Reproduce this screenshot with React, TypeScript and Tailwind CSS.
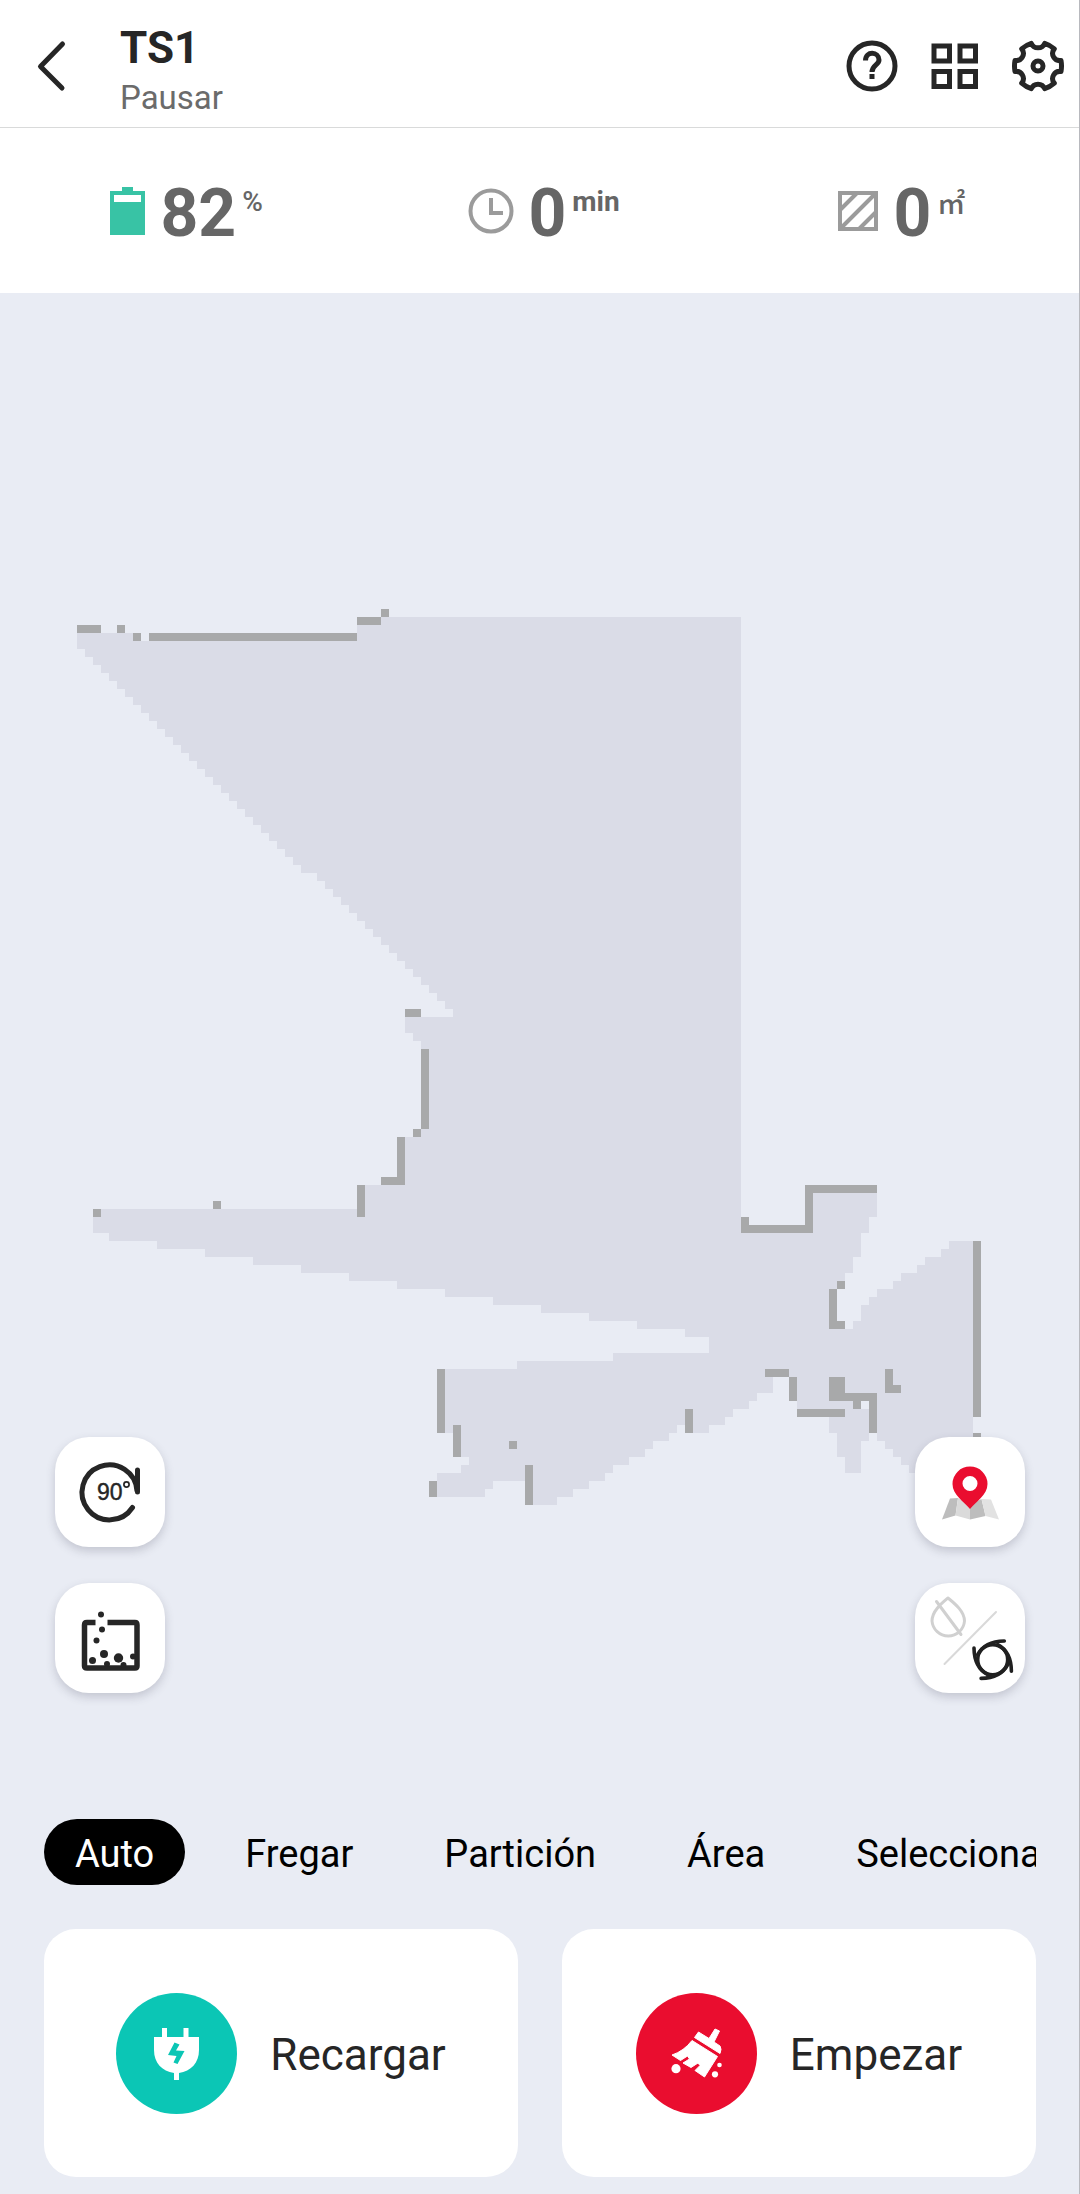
import { useState, type ReactNode } from "react";

const CELL = 8;
const MAP_X = 77;
const MAP_Y = 316;

/** A block of map cells: [column, row, columns, rows]. */
type Block = [number, number, number, number];

const walls: Block[] = [
  [0, 2, 3, 1], [5, 2, 1, 1], [7, 3, 1, 1], [9, 3, 26, 1], [35, 1, 3, 1], [38, 0, 1, 1],
  [41, 50, 2, 1], [43, 55, 1, 10], [42, 65, 1, 1], [40, 66, 1, 6], [38, 71, 2, 1], [35, 72, 1, 4],
  [17, 74, 1, 1], [2, 75, 1, 1],
  [45, 95, 1, 8], [47, 102, 1, 4], [44, 109, 1, 2], [56, 107, 1, 5], [54, 104, 1, 1], [76, 100, 1, 3],
  [83, 76, 1, 2], [84, 77, 8, 1], [91, 72, 1, 5], [92, 72, 8, 1],
  [95, 84, 1, 1], [94, 85, 1, 5], [95, 89, 1, 1],
  [112, 79, 1, 22], [112, 103, 1, 1],
  [86, 95, 3, 1], [89, 96, 1, 3], [90, 100, 6, 1],
  [94, 96, 2, 3], [96, 98, 4, 1], [97, 99, 1, 1], [99, 99, 1, 4], [101, 95, 1, 3], [102, 97, 1, 1],
];

/** Runs of cleaned floor: [row, rows, first column, end column]. */
type Run = [number, number, number, number];

const upperEdge: Run[] = Array.from({ length: 46 }, (_, i): Run => {
  const row = i + 5;
  return [row, 1, row < 33 ? row - 4 : row - 3, 83];
});

const floor: Run[] = [
  [1, 1, 38, 83], [2, 2, 35, 83], [3, 1, 0, 7], [4, 1, 0, 83],
  ...upperEdge,
  [51, 2, 41, 83], [53, 1, 42, 83], [54, 12, 43, 83], [66, 6, 41, 83], [72, 3, 36, 83], [75, 1, 3, 83],
  [76, 2, 2, 83], [73, 3, 92, 100], [76, 2, 92, 99],
  [78, 1, 4, 98], [79, 1, 10, 98], [80, 1, 16, 98], [81, 1, 22, 97], [82, 1, 28, 97],
  [83, 1, 34, 96], [84, 1, 40, 95], [85, 1, 46, 94], [86, 1, 52, 94], [87, 1, 58, 94],
  [88, 1, 64, 94], [89, 1, 70, 94],
  [79, 1, 109, 112], [80, 1, 108, 112], [81, 1, 106, 112], [82, 1, 105, 112], [83, 1, 103, 112],
  [84, 1, 102, 112], [85, 1, 100, 112], [86, 1, 99, 112], [87, 2, 98, 112], [89, 1, 97, 112],
  [90, 1, 76, 112], [91, 2, 79, 112], [93, 1, 67, 112], [94, 1, 55, 112], [95, 1, 46, 112],
  [96, 2, 46, 87], [98, 1, 46, 85], [99, 1, 46, 84], [100, 1, 46, 82], [101, 1, 46, 81],
  [102, 1, 46, 75], [102, 1, 77, 79], [103, 1, 48, 74], [104, 1, 48, 72], [105, 1, 48, 71],
  [106, 1, 49, 69], [107, 1, 48, 67], [108, 1, 45, 66], [109, 1, 45, 52], [109, 1, 57, 64],
  [110, 1, 45, 51], [110, 1, 57, 62], [111, 1, 57, 60],
  [96, 3, 90, 112], [99, 1, 90, 98], [99, 1, 99, 112], [100, 1, 96, 112], [101, 2, 94, 112],
  [103, 1, 95, 99], [103, 1, 100, 112], [104, 2, 95, 98], [106, 2, 96, 98],
  [104, 1, 101, 112], [105, 1, 102, 112], [106, 1, 103, 112], [107, 1, 104, 112],
  [108, 1, 106, 112], [109, 1, 108, 112],
];

function FloorMap() {
  return (
    <svg viewBox="0 0 1080 1220" className="block w-full" shapeRendering="crispEdges" role="img" aria-label="Mapa">
      <g fill="#dadce7">
        {floor.map(([row, rows, from, to], i) => (
          <rect key={i} x={MAP_X + from * CELL} y={MAP_Y + row * CELL} width={(to - from) * CELL} height={rows * CELL} />
        ))}
      </g>
      <g fill="#a8a9aa">
        {walls.map(([col, row, cols, rows], i) => (
          <rect key={i} x={MAP_X + col * CELL} y={MAP_Y + row * CELL} width={cols * CELL} height={rows * CELL} />
        ))}
      </g>
    </svg>
  );
}

function BackIcon() {
  return (
    <svg width="52" height="52" viewBox="0 0 52 52" fill="none" stroke="#262626" strokeWidth="5" strokeLinecap="round" strokeLinejoin="round">
      <path d="M38.500 4 L16.500 26.500 L38 48" />
    </svg>
  );
}

function HelpIcon() {
  return (
    <svg width="52" height="52" viewBox="0 0 52 52" fill="none" stroke="#262626" strokeWidth="5">
      <circle cx="26" cy="26" r="23" />
      <path d="M19.500 20.500 C19.500 10.500 33 11.500 33 20 C33 25 26 25 26 32" />
      <rect x="23.500" y="34" width="5" height="5" fill="#262626" stroke="none" />
    </svg>
  );
}

function GridIcon() {
  return (
    <svg width="52" height="52" viewBox="0 0 52 52" fill="none" stroke="#262626" strokeWidth="5">
      <path d="M5 6H20.500V21H5Z M31 6H46.500V21H31Z M5 31.500H20.500V46.500H5Z M31 31.500H46.500V46.500H31Z" />
    </svg>
  );
}

function GearIcon() {
  return (
    <svg width="52" height="52" viewBox="-26 -26 52 52" fill="none" stroke="#262626" strokeWidth="5" strokeLinejoin="round">
      <path d="M23 -5.500 Q24 0 23 5.500 A7.200 7.200 0 0 0 16.300 17.200 Q12 21 6.700 22.700 A7.200 7.200 0 0 0 -6.700 22.700 Q-12 21 -16.300 17.200 A7.200 7.200 0 0 0 -23 5.500 Q-24 0 -23 -5.500 A7.200 7.200 0 0 0 -16.300 -17.200 Q-12 -21 -6.700 -22.700 A7.200 7.200 0 0 0 6.700 -22.700 Q12 -21 16.300 -17.200 A7.200 7.200 0 0 0 23 -5.500Z" />
      <circle r="5" />
    </svg>
  );
}

function BatteryIcon() {
  return (
    <svg width="36" height="48" viewBox="0 0 36 48" fill="#38c3a5">
      <path fillRule="evenodd" d="M12 0H23V4H35V48H0V4H12Z M4 8V15H31V8Z" />
    </svg>
  );
}

function ClockIcon() {
  return (
    <svg width="46" height="46" viewBox="0 0 46 46" fill="none" stroke="#9b9b9b" strokeWidth="4">
      <circle cx="23" cy="23" r="20.500" />
      <path d="M23 10V25H35" />
    </svg>
  );
}

function AreaIcon() {
  return (
    <svg width="42" height="42" viewBox="0 0 42 42" fill="none" stroke="#9b9b9b" strokeWidth="4">
      <path d="M3 3H39V39H3Z M3 20L20 3 M4 38L38 4 M22 39L39 22" />
    </svg>
  );
}

function RotateIcon() {
  return (
    <svg width="110" height="110" viewBox="0 0 110 110" fill="none" stroke="#262626" strokeWidth="5" strokeLinecap="round">
      <path d="M77.500 70.500 A27.500 27.500 0 1 1 82 54 M82.500 33V55" />
      <text x="42" y="63" fontFamily="Liberation Sans, Arial, sans-serif" fontSize="23" fill="#262626" stroke="#262626" strokeWidth="0.400">90</text>
      <circle cx="71.500" cy="47.500" r="2.600" strokeWidth="1.700" />
    </svg>
  );
}

function DirtBoxIcon() {
  return (
    <svg width="110" height="110" viewBox="0 0 110 110" fill="#262626">
      <path d="M40.500 39.500H32Q29.500 39.500 29.500 42V83Q29.500 85 32 85H80Q82 85 82 83V42Q82 39.500 80 39.500H52.500" fill="none" stroke="#262626" strokeWidth="5.500" />
      <circle cx="46" cy="31.500" r="3" />
      <circle cx="47" cy="46.500" r="3" />
      <circle cx="41.500" cy="57.500" r="3" />
      <circle cx="49" cy="71" r="4" />
      <circle cx="37.500" cy="77.500" r="3.500" />
      <circle cx="63.500" cy="75" r="4.700" />
      <circle cx="78" cy="73.500" r="3" />
      <circle cx="52" cy="81" r="3" />
      <circle cx="68.500" cy="82" r="3" />
    </svg>
  );
}

function PinIcon() {
  return (
    <svg width="110" height="110" viewBox="0 0 110 110">
      <path d="M35 61.500L27 82.500L40.500 78.500L43 61Z" fill="#bdbdbd" />
      <path d="M43 61L40.500 78.500L55 82.500V68Z" fill="#dadada" />
      <path d="M55 68V82.500L70.500 79L66.500 62Z" fill="#bdbdbd" />
      <path d="M66.500 62L70.500 79L84 82.500L76 62.500Z" fill="#e2e2e2" />
      <path fillRule="evenodd" fill="#ea0d2f" d="M55 72C49 64.500 37.500 58 37.500 47A17.500 17.500 0 0 1 72.500 47C72.500 58 61 64.500 55 72Z M55 39A7.500 7.500 0 1 0 55 54A7.500 7.500 0 1 0 55 39Z" />
    </svg>
  );
}

function ModeIcon() {
  return (
    <svg width="110" height="110" viewBox="0 0 110 110" fill="none" strokeLinecap="round">
      <path d="M81 29L29.500 81" stroke="#d9d9d9" strokeWidth="2" />
      <path d="M33 15C27 20 17 28 17 38A16.300 16.300 0 0 0 49.500 38C49.500 28 39 20 33 15Z M21.500 18.500L46 51.500" stroke="#d0d0d0" strokeWidth="3" strokeLinejoin="round" />
      <g transform="translate(77.700 76.700)" stroke="#202020" strokeWidth="3.600">
        <circle r="15" />
        <path d="M11.600 -18.700Q-8 -18.500 -15 -5" />
        <path d="M18.700 11.600Q18.500 -8 5 -15" />
        <path d="M-11.600 18.700Q8 18.500 15 5" />
        <path d="M-18.700 -11.600Q-18.500 8 -5 15" />
      </g>
    </svg>
  );
}

function PlugIcon() {
  return (
    <svg width="121" height="121" viewBox="0 0 121 121">
      <circle cx="60.500" cy="60.500" r="60.500" fill="#0bc6b5" />
      <path fill="#fff" d="M46 35H51V44H67.500V35H72.500V44H83V57C83 70 75 78 63 80V87H58V80C46 78 38 70 38 57V44H46Z" />
      <path fill="#0bc6b5" d="M58.500 49.500L63.500 51.500L60 57.500L68.500 58L61.500 71L57.500 69.500L60.500 63L52 62Z" />
    </svg>
  );
}

function BroomIcon() {
  return (
    <svg width="121" height="121" viewBox="0 0 121 121">
      <circle cx="60.500" cy="60.500" r="60.500" fill="#ea0d2f" />
      <g fill="#fff" stroke="#fff" strokeWidth="1" strokeLinejoin="round">
        <path d="M79 36L83.500 38L78 49L84 53Q86 56 84 60.500L58.500 44.500L62.500 39L73 45.500Z" />
        <path d="M56 47.500L81.500 63.500L68.500 84L59 77.500L64 72.500L62 70L55 74.500L47 70L53.500 66L51.500 63L44.500 67.500L36 62Q48 58 56 47.500Z" />
      </g>
      <circle cx="40" cy="75.700" r="4.600" fill="#fff" />
      <circle cx="79" cy="81.300" r="3.100" fill="#fff" />
      <circle cx="83.500" cy="72" r="2.300" fill="#fff" />
    </svg>
  );
}

function Stat({ icon, value, unit, unitClass }: { icon: ReactNode; value: string; unit: string; unitClass: string }) {
  return (
    <div className="flex items-center justify-center text-[#666]">
      {icon}
      <div className="ml-3.5 flex items-start pt-1.5">
        <span className="text-[66px] leading-[70px] font-bold">{value}</span>
        <span className={unitClass}>{unit}</span>
      </div>
    </div>
  );
}

function FloatingButton({ label, children }: { label: string; children: ReactNode }) {
  return (
    <button type="button" aria-label={label} className="size-[110px] rounded-[34px] bg-white shadow-[0_4px_10px_rgba(60,60,80,0.22)]">
      {children}
    </button>
  );
}

function ActionCard({ label, children }: { label: string; children: ReactNode }) {
  return (
    <button type="button" className="flex h-[248px] items-center justify-center gap-[33px] rounded-[32px] bg-white text-[44px] text-[#262626]">
      {children}
      <span className="pt-1">{label}</span>
    </button>
  );
}

const tabs = ["Auto", "Fregar", "Partición", "Área", "Seleccionar"];

export default function App() {
  const [active, setActive] = useState("Auto");

  return (
    <div className="relative flex min-h-screen flex-col bg-[#e9ecf4] font-['Roboto',sans-serif] after:absolute after:inset-y-0 after:right-0 after:w-px after:bg-[#b8b9be]">
      <header className="flex h-32 items-center border-b border-[#d9dada] bg-white pr-4 pl-6">
        <button type="button" aria-label="Volver" className="mt-1">
          <BackIcon />
        </button>
        <div className="ml-11 flex-1 pt-4">
          <h1 className="text-[44px] leading-[52px] font-bold text-[#262626]">TS1</h1>
          <p className="text-[33px] leading-[48px] text-[#6b6b6b]">Pausar</p>
        </div>
        <nav className="mt-1 flex gap-[31px]">
          <button type="button" aria-label="Ayuda"><HelpIcon /></button>
          <button type="button" aria-label="Menú"><GridIcon /></button>
          <button type="button" aria-label="Ajustes"><GearIcon /></button>
        </nav>
      </header>

      <section className="grid h-[165px] grid-cols-3 items-center bg-white pl-2">
        <Stat icon={<BatteryIcon />} value="82" unit="%" unitClass="ml-1.5 text-[28px] leading-[46px] font-medium" />
        <Stat icon={<ClockIcon />} value="0" unit="min" unitClass="ml-1.5 text-[28px] leading-[46px] font-bold" />
        <Stat icon={<AreaIcon />} value="0" unit="㎡" unitClass="ml-1.5 font-['Noto_Sans_CJK_SC',sans-serif] text-[28px] leading-[46px] font-medium" />
      </section>

      <main className="relative flex-1">
        <FloorMap />
        <div className="absolute inset-x-[55px] bottom-[126px] flex justify-between">
          <div className="flex flex-col gap-9">
            <FloatingButton label="Girar 90°"><RotateIcon /></FloatingButton>
            <FloatingButton label="Vaciar depósito"><DirtBoxIcon /></FloatingButton>
          </div>
          <div className="flex flex-col gap-9">
            <FloatingButton label="Mapas"><PinIcon /></FloatingButton>
            <FloatingButton label="Modo de limpieza"><ModeIcon /></FloatingButton>
          </div>
        </div>
      </main>

      <footer className="px-11 pb-[17px]">
        <div role="tablist" className="flex gap-[29px] overflow-hidden">
          {tabs.map((tab) => (
            <button
              key={tab}
              type="button"
              role="tab"
              aria-selected={tab === active}
              onClick={() => setActive(tab)}
              className={
                tab === active
                  ? "h-[66px] shrink-0 rounded-full bg-black px-[31px] pt-1 text-[38px] leading-[62px] text-white"
                  : "h-[66px] shrink-0 rounded-full px-[31px] pt-1 text-[38px] leading-[62px] text-black"
              }
            >
              {tab}
            </button>
          ))}
        </div>
        <div className="mt-11 grid grid-cols-2 gap-11">
          <ActionCard label="Recargar"><PlugIcon /></ActionCard>
          <ActionCard label="Empezar"><BroomIcon /></ActionCard>
        </div>
      </footer>
    </div>
  );
}
